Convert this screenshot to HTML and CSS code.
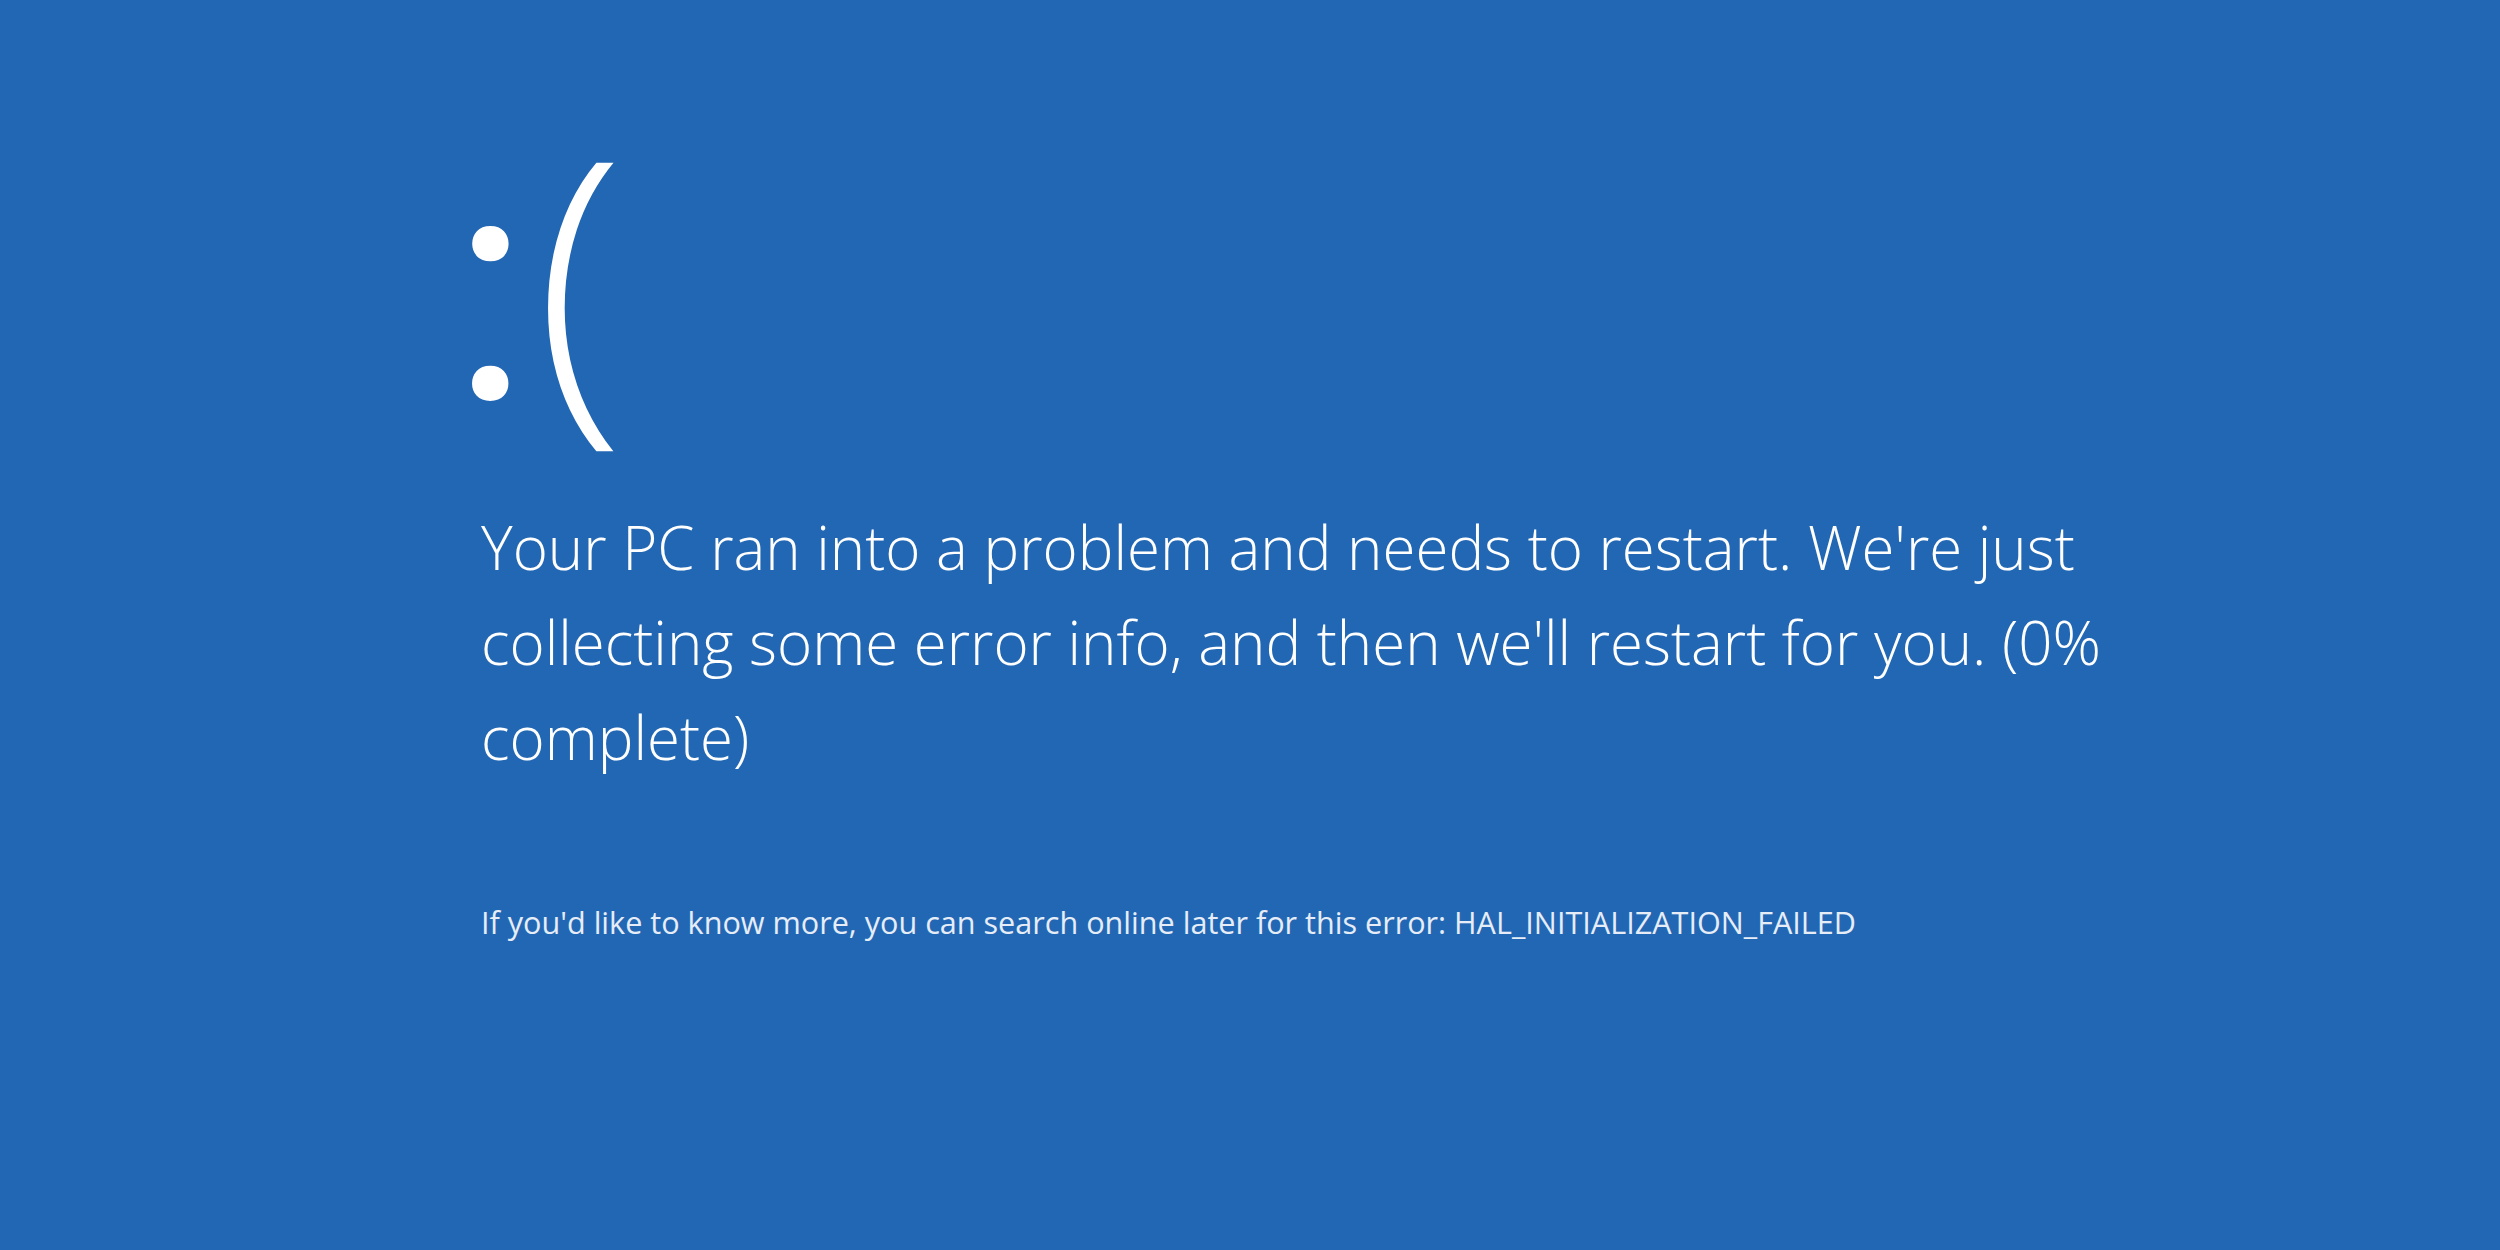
FILE: index.html
```html
<!DOCTYPE html>
<html lang="en">
<head>
<meta charset="utf-8">
<title>Your PC ran into a problem</title>
<link rel="stylesheet" href="styles.css">
</head>
<body>
<main class="screen">
  <div class="face"><span class="eyes">:</span><span class="mouth">(</span></div>
  <p class="msg">Your PC ran into a problem and needs to restart. We're just collecting some error info, and then we'll restart for you. (0% complete)</p>
  <p class="info">If you'd like to know more, you can search online later for this error: HAL_INITIALIZATION_FAILED</p>
</main>
</body>
</html>
```
FILE: styles.css
```css
html, body {
  margin: 0;
  padding: 0;
  height: 100%;
  background: #2267b4;
  overflow: hidden;
}
.screen {
  box-sizing: border-box;
  height: 100%;
  padding: 127px 0 0 470px;
  color: #ffffff;
  display: flex;
  flex-direction: column;
}
.face {
  display: flex;
  align-items: baseline;
  height: 288px;
  line-height: 288px;
  margin-left: -19px;
}
.eyes {
  font-family: Roboto, sans-serif;
  font-weight: 400;
  font-size: 324px;
  margin-right: 5px;
}
.mouth {
  font-family: "Open Sans", sans-serif;
  font-weight: 350;
  font-size: 331px;
}
.msg {
  margin: 85px 0 0 11px;
  max-width: 1720px;
  font-family: "Open Sans", "Noto Sans", sans-serif;
  font-weight: 300;
  font-size: 60px;
  line-height: 95px;
}
.info {
  margin: 117px 0 0 11px;
  font-family: "Open Sans", "Noto Sans", sans-serif;
  font-weight: 400;
  font-size: 30.6px;
  line-height: 40px;
  color: #e6edf7;
}
```
